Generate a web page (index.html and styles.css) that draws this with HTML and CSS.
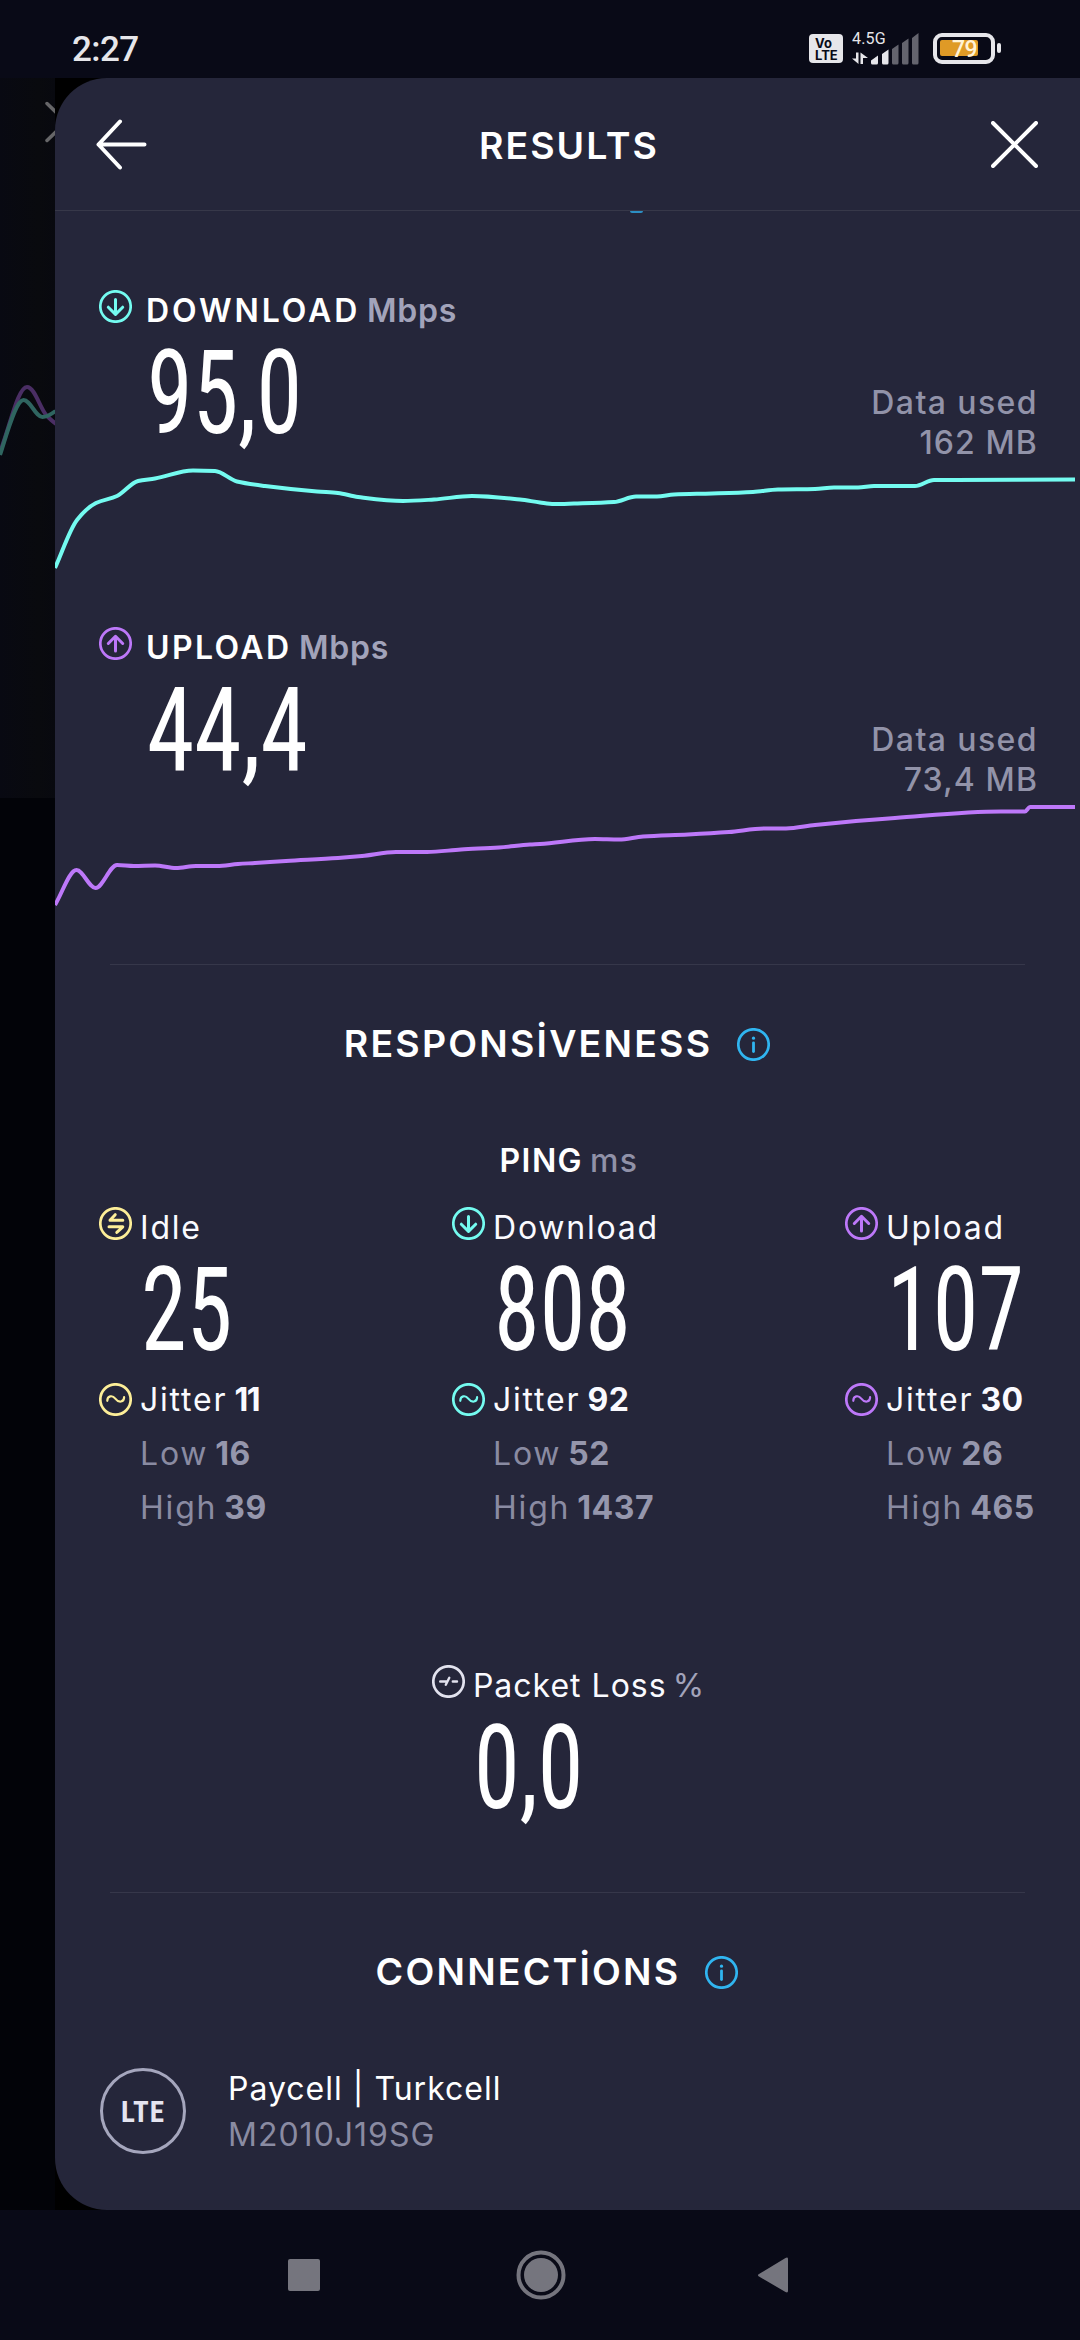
FILE: index.html
```html
<!DOCTYPE html>
<html lang="en">
<head>
    <meta charset="UTF-8">
    <meta name="viewport" content="width=device-width, initial-scale=1.0">
    <title>Results</title>
    <link rel="stylesheet" href="styles.css">
</head>
<body>
    <svg width="0" height="0" class="defs">
        <symbol id="down" viewBox="0 0 33 33">
            <circle cx="16.5" cy="16.5" r="15.2"/>
            <path d="M16.5 9.5v14.5M9.3 17.2l7.2 7.2 7.2-7.2" stroke-width="3"/>
        </symbol>
        <symbol id="up" viewBox="0 0 33 33">
            <circle cx="16.5" cy="16.5" r="15.2"/>
            <path d="M16.5 24V9.5M9.3 16.5l7.2-7.2 7.2 7.2" stroke-width="3"/>
        </symbol>
        <symbol id="idle" viewBox="0 0 33 33">
            <circle cx="16.5" cy="16.5" r="15.2"/>
            <path d="M23.8 13.3H11l5.2-5.6M10 19.8h13.8l-6 5.6" stroke-width="3"/>
        </symbol>
        <symbol id="jitter" viewBox="0 0 33 33">
            <circle cx="16.5" cy="16.5" r="15.2"/>
            <path d="M8.3 17.8c0-5 5-6 8-2.2 3.5 4.6 8.8 3.6 8.8-1.4" stroke-width="2.2"/>
        </symbol>
        <symbol id="loss" viewBox="0 0 33 33">
            <circle cx="16.5" cy="16.5" r="15.2"/>
            <path d="M8.2 16.5h7M13.8 19.8l3.5-7M20.8 16.5h4.2" stroke-width="2.4"/>
        </symbol>
        <symbol id="info" viewBox="0 0 33 33">
            <circle cx="16.5" cy="16.5" r="15.2"/>
            <path d="M16.5 14.8v8.7" stroke-width="2.8"/>
            <path d="M16.5 10v.2" stroke-width="3.2"/>
        </symbol>
    </svg>

    <div class="status">
        <span class="time">2:27</span>
        <div class="status-icons">
            <div class="volte"><span>Vo</span><span>LTE</span></div>
            <div class="network">
                <span class="net-type">4.5G</span>
                <svg class="signal" width="68" height="32" viewBox="0 0 68 32">
                    <path class="on" d="M4 19.5h2.5V31L0 25.5h4zM11 31H8.5V19.5L16 25h-5z"/>
                    <path class="on" d="M19 27.5l7-5V30q0 1.5-1.5 1.5h-4Q19 31.5 19 30zM30 21l6.5-4.5V30q0 1.5-1.5 1.5h-3.5Q30 31.5 30 30z"/>
                    <path class="off" d="M40 16l6.5-4.5V30q0 1.5-1.5 1.5h-3.5Q40 31.5 40 30zM50 10l6.5-4.5V30q0 1.5-1.5 1.5h-3.5Q50 31.5 50 30zM60 5l6.5-5V30q0 1.5-1.5 1.5h-3.5Q60 31.5 60 30z"/>
                </svg>
            </div>
            <div class="battery"><div class="level"></div><span>79</span></div>
            <div class="battery-tip"></div>
        </div>
    </div>

    <div class="main">
        <svg class="behind" width="55" height="2132" viewBox="0 0 55 2132">
            <defs>
                <linearGradient id="shade">
                    <stop offset="0" stop-color="#080912"/>
                    <stop offset="0.7" stop-color="#090a0e"/>
                    <stop offset="1" stop-color="#08090f"/>
                </linearGradient>
            </defs>
            <rect width="55" height="720" fill="url(#shade)"/>
            <rect y="720" width="55" height="1412" fill="#020308"/>
            <path d="M47 25.5L66 44 47 62.5" stroke="#666668" stroke-width="3.5" stroke-linecap="round"/>
            <path d="M0 374C10 348 18 309 27 309c8 0 13 22 20 29q4 4 9 8" stroke="#4a2e64" stroke-width="4"/>
            <path d="M0 377C8 352 16 322 23.5 322c7 0 12 17 19 17q5 0 13-6" stroke="#2f6560" stroke-width="4"/>
        </svg>

        <div class="panel">
            <div class="header">
                <svg width="51" height="51" viewBox="0 0 51 51" class="white"><path d="M2.5 25.5h46M24 2.5L2.5 25.5 24 48.5"/></svg>
                <h1>RESULTS</h1>
                <svg width="47" height="47" viewBox="0 0 47 47" class="white"><path d="M2 2l43 43M45 2L2 45"/></svg>
            </div>
            <div class="scrolled"></div>

            <div class="speed">
                <div class="speed-row">
                    <svg class="icon teal"><use href="#down"/></svg>
                    <div class="reading">
                        <p class="title"><span class="dl">DOWNLOAD</span><span class="unit">Mbps</span></p>
                        <p class="big">95,0</p>
                    </div>
                    <p class="used">Data used<br><span>162 MB</span></p>
                </div>
                <svg class="chart teal" id="download" width="1025" height="111" viewBox="0 0 1025 111"></svg>
            </div>

            <div class="speed">
                <div class="speed-row">
                    <svg class="icon purple"><use href="#up"/></svg>
                    <div class="reading">
                        <p class="title"><span class="ul">UPLOAD</span><span class="unit">Mbps</span></p>
                        <p class="big fours">44,4</p>
                    </div>
                    <p class="used">Data used<br><span>73,4 MB</span></p>
                </div>
                <svg class="chart purple" id="upload" width="1025" height="111" viewBox="0 0 1025 111"></svg>
            </div>

            <hr class="first">
            <h2>RESPONSİVENESS <svg class="icon blue"><use href="#info"/></svg></h2>

            <p class="ping"><b>PING</b><span>ms</span></p>
            <div class="pings">
                <div class="col">
                    <svg class="icon yellow"><use href="#idle"/></svg>
                    <div><p class="label">Idle</p><p class="big">25</p></div>
                    <svg class="icon yellow jit"><use href="#jitter"/></svg>
                    <p class="label jit">Jitter<b class="ones">11</b></p>
                    <p class="label dim">Low<b>16</b></p>
                    <p class="label dim">High<b>39</b></p>
                </div>
                <div class="col">
                    <svg class="icon teal"><use href="#down"/></svg>
                    <div><p class="label">Download</p><p class="big">808</p></div>
                    <svg class="icon teal jit"><use href="#jitter"/></svg>
                    <p class="label jit">Jitter<b>92</b></p>
                    <p class="label dim">Low<b>52</b></p>
                    <p class="label dim">High<b>1437</b></p>
                </div>
                <div class="col">
                    <svg class="icon purple"><use href="#up"/></svg>
                    <div><p class="label">Upload</p><p class="big">107</p></div>
                    <svg class="icon purple jit"><use href="#jitter"/></svg>
                    <p class="label jit">Jitter<b>30</b></p>
                    <p class="label dim">Low<b>26</b></p>
                    <p class="label dim">High<b>465</b></p>
                </div>
            </div>

            <div class="loss">
                <svg class="icon pale"><use href="#loss"/></svg>
                <div><p class="label">Packet Loss<span>%</span></p><p class="big">0,0</p></div>
            </div>

            <hr class="second">
            <h2>CONNECTİONS <svg class="icon blue"><use href="#info"/></svg></h2>

            <div class="connection">
                <div class="lte">LTE</div>
                <div>
                    <p class="carrier">Paycell | Turkcell</p>
                    <p class="model">M2010J19SG</p>
                </div>
            </div>
        </div>
    </div>

    <div class="nav">
        <svg width="32" height="32"><rect width="32" height="32" rx="2"/></svg>
        <svg width="50" height="50"><circle class="ring" cx="25" cy="25" r="22.5"/><circle cx="25" cy="25" r="17"/></svg>
        <svg width="32" height="38"><path d="M2 18L28.5 2Q31 .8 31 3v32q0 2.2-2.5 1L2 20.5Q0 19 2 18z"/></svg>
    </div>

    <script>
        const download = [[0,106],[22,58],[41,41],[62,34],[83,19],[100,16.5],[138,8.5],[160,9],[182,19.5],[210,24],[262,29.5],[283,31],[303,35],[348,39],[379,37.5],[417,34],[465,37.5],[485,40.5],[499,42],[519,41.5],[559,40],[581,34.5],[602,34.5],[619,32.5],[657,31.5],[698,30],[723,27.5],[760,27],[779,25.5],[803,25.5],[819,24],[860,24],[879,18],[900,18],[1020,17.5]];
        const upload = [[0,106],[21.5,71],[40.5,89],[62,66],[79,67],[100,66.5],[121,69],[141,67],[162,67],[183,65],[200,64],[231,62],[283,59],[307,57],[341,53],[372,53],[406,50.5],[444,48.5],[475,45.5],[485,45],[540,40],[564,40.5],[588,37.5],[633,35.5],[674,33],[709,29.5],[731,29.5],[760,26],[840,19],[946,12.5],[970,12.5],[975,8],[1020,8]];

        // smooth line through the samples, flat at the turning points
        function draw(id, p) {
            let m = [];
            for (let i = 0; i < p.length; i++) {
                let a = p[i - 1], b = p[i], c = p[i + 1];
                if (!a) { m.push((c[1] - b[1]) / (c[0] - b[0])); continue; }
                if (!c) { m.push(0); continue; }
                let l = (b[1] - a[1]) / (b[0] - a[0]);
                let r = (c[1] - b[1]) / (c[0] - b[0]);
                m.push(l * r <= 0 ? 0 : 2 * l * r / (l + r));
            }
            let d = `M${p[0][0]} ${p[0][1]}`;
            for (let i = 1; i < p.length; i++) {
                let h = (p[i][0] - p[i - 1][0]) / 3;
                d += `C${p[i - 1][0] + h} ${p[i - 1][1] + m[i - 1] * h} ${p[i][0] - h} ${p[i][1] - m[i] * h} ${p[i][0]} ${p[i][1]}`;
            }
            document.getElementById(id).innerHTML = `<path d="${d}"/>`;
        }
        draw("download", download);
        draw("upload", upload);
    </script>
</body>
</html>
```
FILE: styles.css
```css
* {
    box-sizing: border-box;
    margin: 0;
    padding: 0;
}
body {
    width: 1080px;
    height: 2340px;
    background: #090a17;
    color: #fff;
    font-family: Inter, "Liberation Sans", sans-serif;
    font-size: 32px;
    line-height: 40px;
    overflow: hidden;
}
svg {
    display: block;
    fill: none;
    flex: none;
}
.defs {
    position: absolute;
}

/* status bar */
.status {
    height: 78px;
    display: flex;
    justify-content: space-between;
    padding: 33px 79px 0 72px;
    font-family: Roboto, sans-serif;
    color: #e6e6ea;
}
.time {
    font-size: 35px;
    font-weight: 500;
    line-height: 33px;
    letter-spacing: -0.6px;
}
.status-icons {
    display: flex;
}
.volte {
    width: 34px;
    height: 29px;
    margin-top: 1px;
    padding: 3px 0 0 6px;
    border-radius: 4px;
    background: #e6e6ea;
    color: #090a17;
    font: bold 13px/12px Inter, sans-serif;
}
.volte span {
    display: block;
}
.network {
    display: grid;
    margin-left: 9px;
    width: 68px;
}
.net-type, .signal {
    grid-area: 1 / 1;
}
.net-type {
    font-size: 16px;
    line-height: 11px;
    letter-spacing: 0.2px;
}
.on {
    fill: #e6e6ea;
}
.off {
    fill: #64646e;
}
.battery {
    display: grid;
    width: 62px;
    height: 31px;
    margin-left: 13px;
    border: 4px solid #e6e6ea;
    border-radius: 9px;
}
.level, .battery span {
    grid-area: 1 / 1;
}
.level {
    width: 38px;
    height: 16px;
    margin: 3px;
    border-radius: 2px;
    background: #df9a26;
}
.battery span {
    padding-left: 15px;
    font-size: 23px;
    font-weight: 500;
    line-height: 25px;
    letter-spacing: -0.5px;
    color: #fff3d6;
}
.battery-tip {
    width: 4px;
    height: 10px;
    margin: 10px 0 0 2px;
    border-radius: 2px;
    background: #e6e6ea;
}

/* panel over the previous screen */
.main {
    display: grid;
    grid-template-columns: 55px 1025px;
    height: 2132px;
    background: #000;
}
.behind {
    overflow: hidden;
}
.panel {
    height: 2132px;
    background: #25263a;
    border-radius: 52px 0 0 52px;
}
.header {
    height: 133px;
    display: flex;
    align-items: center;
    justify-content: space-between;
    padding: 0 42px 0 41px;
    border-bottom: 1px solid #373849;
}
.white {
    stroke: #fff;
    stroke-width: 4;
    stroke-linecap: round;
    stroke-linejoin: round;
}
h1, h2 {
    font-size: 37.5px;
    font-weight: 600;
    line-height: 48px;
}
h1 {
    padding-top: 3px;
    letter-spacing: 2px;
}
.scrolled {
    width: 13px;
    height: 2px;
    margin-left: 575px;
    border-radius: 0 0 6px 6px;
    background: #2c8fc4;
}
.icon {
    width: 33px;
    height: 33px;
    stroke-width: 2.7;
    stroke-linecap: round;
    stroke-linejoin: round;
}
.teal {
    stroke: #74fbf0;
}
.purple {
    stroke: #bd78f9;
}
.yellow {
    stroke: #fdee98;
}
.blue {
    stroke: #30b5f0;
}
.pale {
    stroke: #e2e2ee;
}

.speed {
    height: 337px;
    padding-top: 54px;
}
.scrolled + .speed {
    margin-top: 23px;
}
.speed-row {
    display: flex;
    height: 172px;
    padding: 0 42px 0 44px;
}
.reading {
    flex: 1;
    margin-left: 14px;
}
.title {
    display: flex;
    height: 40px;
    padding-top: 1px;
    font-weight: 600;
}
.dl {
    width: 221px;
    letter-spacing: 2.9px;
}
.ul {
    width: 153px;
    letter-spacing: 2.4px;
}
.unit {
    letter-spacing: 0.8px;
    color: #a2a3ba;
}
.big {
    width: max-content;
    margin: 13px 0 0 1px;
    font-family: Roboto, sans-serif;
    font-size: 117px;
    font-weight: 400;
    font-stretch: 75%;
    line-height: 100px;
    transform: scaleX(0.79);
    transform-origin: left;
}
.fours {
    transform: scaleX(0.82);
}
.used {
    align-self: flex-end;
    margin-bottom: -1px;
    text-align: right;
    font-weight: 500;
    letter-spacing: 1.4px;
    color: #9293a9;
}
.used span {
    letter-spacing: 1.1px;
}
.chart {
    stroke-width: 4;
}

hr {
    height: 1px;
    margin: 0 55px;
    border: 0;
    background: #36374a;
}
.first {
    margin-top: 54px;
}
.second {
    margin-top: 74px;
}
h2 {
    display: flex;
    justify-content: center;
    gap: 25px;
    height: 48px;
    margin-top: 54px;
    padding: 1px 21px 0 0;
    letter-spacing: 2.2px;
}
h2 .icon {
    margin-top: 8px;
}

.ping {
    display: flex;
    justify-content: center;
    gap: 7px;
    height: 40px;
    margin-top: 73px;
    padding: 1px 0 0 3px;
    font-weight: 500;
    color: #9091a8;
    letter-spacing: 1.4px;
}
.ping b {
    font-weight: 600;
    color: #fff;
}
.pings {
    display: grid;
    grid-template-columns: 353px 393px auto;
    margin: 27px 0 0 44px;
}
.col {
    display: grid;
    grid-template-columns: 33px 1fr;
    column-gap: 8px;
    align-content: start;
}
.label {
    height: 40px;
    padding-top: 1px;
    color: #fafaff;
    letter-spacing: 1.8px;
}
.label b {
    margin-left: 7px;
    font-weight: 700;
    letter-spacing: 0.5px;
}
.label .ones {
    letter-spacing: -1.5px;
}
.jit {
    margin-top: 19px;
}
.icon.jit {
    margin-top: 23px;
}
.dim {
    grid-column: 2;
    margin-top: 14px;
    color: #8a8ba2;
}
.dim b {
    color: #9596ac;
}

.loss {
    display: flex;
    justify-content: center;
    gap: 8px;
    margin-top: 138px;
    padding-left: 2px;
}
.loss .label {
    letter-spacing: 1px;
}
.loss .label span {
    margin-left: 6px;
    color: #a2a3ba;
}

.connection {
    display: flex;
    align-items: center;
    gap: 42px;
    height: 92px;
    margin: 70px 0 0 45px;
    line-height: 46px;
    letter-spacing: 1px;
}
.carrier {
    padding-top: 1px;
}
.lte {
    width: 86px;
    height: 86px;
    border: 3px solid #a5a6bd;
    border-radius: 50%;
    text-align: center;
    font: bold 29px/82px Roboto, sans-serif;
    font-stretch: 80%;
    color: #e4e4f0;
}
.model {
    color: #8a8ba2;
}

.nav {
    display: flex;
    align-items: center;
    height: 130px;
    padding-left: 288px;
    gap: 193px;
}
.nav svg {
    fill: #75757e;
}
.nav svg:nth-child(2) {
    margin: 0 -2px 0 3px;
}
.nav .ring {
    fill: none;
    stroke: #75757e;
    stroke-width: 4;
}
```
